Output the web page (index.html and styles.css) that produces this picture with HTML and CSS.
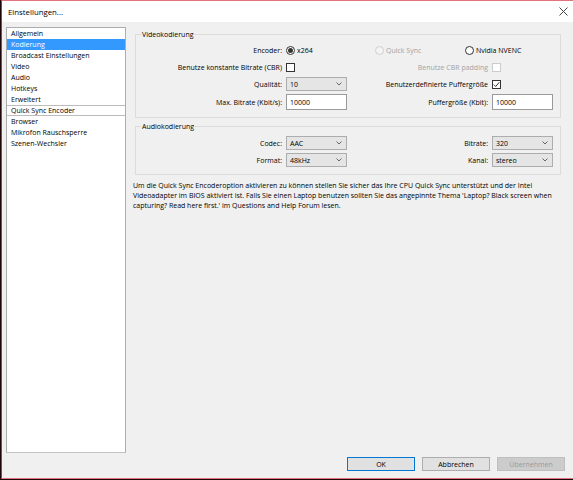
FILE: index.html
```html
<!DOCTYPE html>
<html lang="de">
<head>
    <meta charset="UTF-8">
    <meta name="viewport" content="width=device-width, initial-scale=1.0">
    <title>Einstellungen</title>
    <link rel="stylesheet" href="styles.css">
</head>
<body>
    <div class="window">
        <div class="titlebar">
            <span class="title">Einstellungen...</span>
            <svg class="close" width="9" height="9" viewBox="0 0 9 9">
                <path d="M0.5 0.5 L8.5 8.5 M8.5 0.5 L0.5 8.5" stroke="#444" stroke-width="1" fill="none"/>
            </svg>
        </div>

        <div class="content">
            <div class="main">
                <ul class="nav">
                    <li>Allgemein</li>
                    <li class="active">Kodierung</li>
                    <li>Broadcast Einstellungen</li>
                    <li>Video</li>
                    <li>Audio</li>
                    <li>Hotkeys</li>
                    <li>Erweitert</li>
                    <li class="section">Quick Sync Encoder</li>
                    <li>Browser</li>
                    <li>Mikrofon Rauschsperre</li>
                    <li>Szenen-Wechsler</li>
                </ul>

                <div class="panel">
                    <div class="group video">
                        <span class="group-title">Videokodierung</span>
                        <div class="form-grid">
                            <span class="field-label">Encoder:</span>
                            <div class="radios">
                                <span class="radio-item"><span class="radio checked"></span>x264</span>
                                <span class="radio-item disabled"><span class="radio"></span>Quick Sync</span>
                                <span class="radio-item"><span class="radio"></span>Nvidia NVENC</span>
                            </div>

                            <span class="field-label">Benutze konstante Bitrate (CBR)</span>
                            <span class="checkbox"></span>
                            <span class="field-label disabled">Benutze CBR padding</span>
                            <span class="checkbox disabled"></span>

                            <span class="field-label">Qualität:</span>
                            <div class="combo"><span>10</span>
                                <svg width="6" height="4" viewBox="0 0 6 4"><path d="M0.5 0.5 L3 3 L5.5 0.5" stroke="#666" fill="none"/></svg>
                            </div>
                            <span class="field-label">Benutzerdefinierte Puffergröße</span>
                            <span class="checkbox">
                                <svg width="7" height="7" viewBox="0 0 7 7"><path d="M0.8 3.6 L2.7 5.5 L6.3 1.2" stroke="#333" stroke-width="1" fill="none"/></svg>
                            </span>

                            <span class="field-label">Max. Bitrate (Kbit/s):</span>
                            <input class="text-input" type="text" value="10000">
                            <span class="field-label">Puffergröße (Kbit):</span>
                            <input class="text-input" type="text" value="10000">
                        </div>
                    </div>

                    <div class="group audio">
                        <span class="group-title">Audiokodierung</span>
                        <div class="form-grid">
                            <span class="field-label">Codec:</span>
                            <div class="combo"><span>AAC</span>
                                <svg width="6" height="4" viewBox="0 0 6 4"><path d="M0.5 0.5 L3 3 L5.5 0.5" stroke="#666" fill="none"/></svg>
                            </div>
                            <span class="field-label">Bitrate:</span>
                            <div class="combo"><span>320</span>
                                <svg width="6" height="4" viewBox="0 0 6 4"><path d="M0.5 0.5 L3 3 L5.5 0.5" stroke="#666" fill="none"/></svg>
                            </div>

                            <span class="field-label">Format:</span>
                            <div class="combo"><span>48kHz</span>
                                <svg width="6" height="4" viewBox="0 0 6 4"><path d="M0.5 0.5 L3 3 L5.5 0.5" stroke="#666" fill="none"/></svg>
                            </div>
                            <span class="field-label">Kanal:</span>
                            <div class="combo"><span>stereo</span>
                                <svg width="6" height="4" viewBox="0 0 6 4"><path d="M0.5 0.5 L3 3 L5.5 0.5" stroke="#666" fill="none"/></svg>
                            </div>
                        </div>
                    </div>

                    <p class="hint">Um die Quick Sync Encoderoption aktivieren zu können stellen Sie sicher das Ihre CPU Quick Sync unterstützt und der Intel Videoadapter im BIOS aktiviert ist. Falls Sie einen Laptop benutzen sollten Sie das angepinnte Thema 'Laptop? Black screen when capturing? Read here first.' im Questions and Help Forum lesen.</p>
                </div>
            </div>

            <div class="footer">
                <button class="default">OK</button>
                <button>Abbrechen</button>
                <button disabled>Übernehmen</button>
            </div>
        </div>
    </div>
</body>
</html>
```

FILE: styles.css
```css
html {
    box-sizing: border-box;
}

*, *::before, *::after {
    box-sizing: inherit;
}

body {
    margin: 0;
    height: 480px;
    background: #1e0609;
    font-family: "Open Sans", "Noto Sans", sans-serif;
    font-size: 7px;
    color: #000;
}

.window {
    margin-left: 1px;
    height: 479px;
    display: flex;
    flex-direction: column;
    background: #f0f0f0;
    border-top: 1px solid #e2727d;
    border-bottom: 1px solid #e2727d;
    border-left: 1px solid #b8323f;
}

.titlebar {
    height: 21px;
    background: white;
    display: flex;
    align-items: center;
    justify-content: space-between;
    padding: 0 5px 0 6px;
}

.title {
    font-size: 7.8px;
}

.content {
    flex: 1;
    display: flex;
    flex-direction: column;
    padding: 5px 8px 7px 4px;
}

.main {
    flex: 1;
    display: flex;
    gap: 9px;
}

/* settings list */
.nav {
    width: 120px;
    margin: 0;
    padding: 0;
    list-style: none;
    background: white;
    border: 1px solid #adadad;
    border-bottom-color: #c2c2c2;
}

.nav li {
    height: 11px;
    line-height: 11px;
    padding-left: 4px;
    white-space: nowrap;
}

.nav li.active {
    background: #3399ff;
    color: white;
}

.nav li.section {
    border-top: 1px solid #bcbcbc;
    border-bottom: 1px solid #bcbcbc;
    line-height: 9px;
}

/* right side */
.panel {
    width: 426px;
    padding-top: 7px;
}

.group {
    position: relative;
    border: 1px solid #dcdcdc;
}

.group.video {
    padding: 8px 0 7px;
}

.group.audio {
    margin-top: 8px;
    padding: 9px 0 7px;
}

.group-title {
    position: absolute;
    top: -5px;
    left: 5px;
    padding: 0 1px;
    line-height: 9px;
    background: #f0f0f0;
}

.form-grid {
    display: grid;
    grid-template-columns: 146px 61px 137px 61px;
    grid-auto-rows: 14px;
    column-gap: 4px;
    row-gap: 3px;
    align-items: center;
}

.video .form-grid {
    grid-template-rows: 14px 14px 14px 16px;
}

.field-label {
    text-align: right;
    white-space: nowrap;
}

.disabled {
    color: #a3a3a3;
}

.radios {
    grid-column: 2 / 5;
    display: grid;
    grid-template-columns: 89px 90px auto;
    align-items: center;
}

.radio-item {
    display: flex;
    align-items: center;
    gap: 2px;
}

.radio {
    width: 9px;
    height: 9px;
    border-radius: 50%;
    border: 1px solid #333;
    background: white;
    display: flex;
    align-items: center;
    justify-content: center;
}

.radio.checked::after {
    content: "";
    width: 5px;
    height: 5px;
    border-radius: 50%;
    background: #333;
}

.radio-item.disabled .radio {
    border-color: #cfcfcf;
    background: #f4f4f4;
}

.checkbox {
    justify-self: start;
    width: 9px;
    height: 9px;
    border: 1px solid #333;
    background: white;
    display: flex;
    align-items: center;
    justify-content: center;
}

.checkbox.disabled {
    border-color: #cccccc;
}

.combo {
    height: 14px;
    border: 1px solid #adadad;
    background: #e5e5e5;
    display: flex;
    align-items: center;
    justify-content: space-between;
    padding: 0 4px 0 3px;
}

.text-input {
    height: 16px;
    width: 61px;
    margin: 0;
    border: 1px solid #9a9a9a;
    background: white;
    padding: 0 3px;
    font-family: inherit;
    font-size: 7px;
    color: #000;
    outline: none;
}

.hint {
    width: 432px;
    margin: 6px 0 0 -2px;
    line-height: 10px;
}

/* dialog buttons */
.footer {
    display: flex;
    justify-content: flex-end;
    gap: 7px;
    margin-top: 4px;
}

button {
    width: 68px;
    height: 14px;
    padding: 0;
    font-family: inherit;
    font-size: 7px;
    color: #000;
    background: #e1e1e1;
    border: 1px solid #adadad;
}

button.default {
    border-color: #0078d7;
}

button:disabled {
    background: #cccccc;
    border-color: #bfbfbf;
    color: #9a9a9a;
}
```
